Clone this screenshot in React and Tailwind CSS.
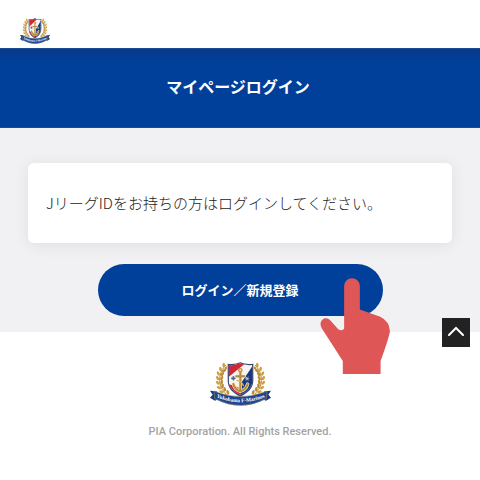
import React from 'react'

const leaves = [
  [91, 46, -35], [82, 56, -20], [76, 68, -5], [74, 81, 5], [74, 94, 15], [77, 107, 30], [84, 118, 42], [94, 128, 52],
]

function Laurel() {
  return (
    <g>
      <path d="M93 42C76 58 69 84 77 106 82 118 92 130 104 136" fill="none" stroke="#b98b35" strokeWidth="3" />
      {leaves.map(([x, y, r]) => (
        <g key={y} transform={`translate(${x} ${y}) rotate(${-r})`} fill="#cf9f45">
          <ellipse cx="-6" cy="0" rx="4" ry="7" transform="rotate(-30 -6 0)" />
          <ellipse cx="6" cy="1" rx="4" ry="7" transform="rotate(32 6 1)" fill="#bd8c33" />
        </g>
      ))}
    </g>
  )
}

function Crest({ id, className }) {
  return (
    <svg viewBox="45 33 183 132" preserveAspectRatio="none" className={className} role="img" aria-label="Yokohama F-Marinos">
      <defs>
        <clipPath id={`${id}-shield`}>
          <path d="M101 42Q120 44 136 37 152 44 172 42V88C172 108 158 122 136 132 114 122 101 108 101 88Z" />
        </clipPath>
        <path id={`${id}-curve`} d="M58 136Q136 172 216 136" />
      </defs>
      <Laurel />
      <g transform="translate(273 0) scale(-1 1)"><Laurel /></g>
      <path d="M96 37Q120 40 136 33 152 40 177 37V88C177 112 160 127 136 138 112 127 96 112 96 88Z" fill="#fff" />
      <path d="M98 38Q120 41 136 34 152 41 175 38V88C175 111 160 126 136 137 112 126 98 111 98 88Z" fill="#35436f" />
      <g clipPath={`url(#${id}-shield)`}>
        <path d="M98 33H176V138H98Z" fill="#f7f5ef" />
        <path d="M98 33H156L98 80Z" fill="#cf2738" />
        <path d="M176 40V138H136V100Z" fill="#17387f" />
        <path d="M98 98L136 112V134H98Z" fill="#cf2738" />
      </g>
      <path d="M136 62V118M124 76H148M115 99C119 114 129 119 136 121 143 119 154 114 158 99" fill="none" stroke="#f1dfac" strokeWidth="10" strokeLinecap="round" />
      <g fill="none" stroke="#b98a3c" strokeWidth="6" strokeLinecap="round">
        <circle cx="136" cy="58" r="5" strokeWidth="4" />
        <path d="M136 66V117M124 76H148M115 99C119 114 129 119 136 121 143 119 154 114 158 99" />
        <path d="M126 88Q142 92 145 104" stroke="#d8b56c" strokeWidth="4" />
      </g>
      <circle cx="115" cy="82" r="6" fill="#93a5c7" />
      <path d="M115 75V89M108 82H122" stroke="#29497e" strokeWidth="2" />
      <path d="M153 77L160 89M160 77L153 89M150 83H163" stroke="#d8dfed" strokeWidth="2" />
      <path d="M45 119L65 121 73 143 60 149 45 140 53 131Z" fill="#173a7b" />
      <path d="M228 119L208 121 200 143 213 149 228 140 220 131Z" fill="#173a7b" />
      <path d="M57 120Q136 153 216 120L214 143Q136 184 59 143Z" fill="#1d4693" stroke="#b99a56" strokeWidth="1.5" />
      <text fill="#fff" fontSize="16" fontWeight="700" fontFamily="Liberation Serif, serif" textAnchor="middle">
        <textPath href={`#${id}-curve`} startOffset="50%">Yokohama F·Marinos</textPath>
      </text>
    </svg>
  )
}

function Hand() {
  return (
    <svg viewBox="62 56 209 287" className="pointer-events-none absolute top-[14px] -right-[7px] h-24 w-[70px]" aria-hidden="true">
      <path
        d="M134 208V80A23 23 0 0 1 181 80V150L242 172Q269 185 271 215 268 235 243 304V343H130V304L67 206C58 190 68 176 79 176 87 176 91 180 95 185L115 208Q125 217 134 208Z"
        fill="#df5656"
      />
    </svg>
  )
}

export default function App() {
  return (
    <div className="min-h-screen bg-white font-['Noto_Sans_CJK_JP',sans-serif]">
      <header className="flex h-12 items-end px-5 pb-1">
        <a href="#top"><Crest id="header" className="block h-[26px] w-[30px]" /></a>
      </header>

      <div className="flex h-20 items-center justify-center border-y border-[#1d4a92] bg-[#00409a] bg-linear-to-b from-[#053b8c] to-[#00409a] to-20% pr-1 pb-1">
        <h1 className="text-base font-bold text-white">マイページログイン</h1>
      </div>

      <main className="bg-[#f1f1f4] px-7 pt-[35px] pb-4">
        <div className="flex h-20 items-center rounded-md bg-white px-[18px] shadow-[0_2px_16px_rgba(0,0,0,0.08)]">
          <p className="text-[15px] font-light text-[#222]">JリーグIDをお持ちの方はログインしてください。</p>
        </div>
        <div className="relative mx-auto mt-[21px] max-w-[285px]">
          <button className="block h-[52px] w-full rounded-full bg-[#00409a] text-[13px] font-bold text-white">
            ログイン／新規登録
          </button>
          <Hand />
        </div>
      </main>

      <footer className="flex flex-col items-center pt-[30px] pb-8">
        <Crest id="footer" className="h-11 w-[61px]" />
        <p className="mt-[18px] font-[Roboto,sans-serif] text-[11px] font-medium text-[#a3a3a3]">PIA Corporation. All Rights Reserved.</p>
      </footer>

      <button aria-label="Back to top" className="fixed right-[10px] bottom-[133px] flex h-[29px] w-7 items-center justify-center bg-[#222]">
        <svg viewBox="0 0 16 10" className="mb-1 h-[10px] w-4" fill="none" stroke="#fff" strokeWidth="2" strokeLinecap="round">
          <path d="M1 9L8 2L15 9" />
        </svg>
      </button>
    </div>
  )
}
